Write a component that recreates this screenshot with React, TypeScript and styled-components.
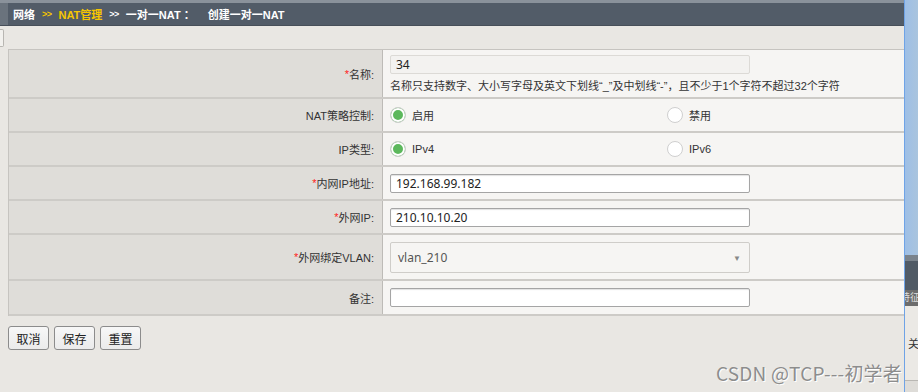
import styled, { createGlobalStyle } from 'styled-components';

const GlobalStyle = createGlobalStyle`
  html, body {
    margin: 0;
    padding: 0;
    background: #e9e7e3;
  }
  body {
    font-family: "Liberation Sans", "Noto Sans CJK SC", sans-serif;
    font-size: 11px;
    color: #333;
  }
`;

const Page = styled.div`
  position: relative;
  display: flex;
  width: 918px;
  height: 392px;
  overflow: hidden;
`;

const Main = styled.div`
  width: 904px;
  display: flex;
  flex-direction: column;
  background: #e9e7e3;
`;

const TopStrip = styled.div`
  height: 3px;
  background: #8a929b;
`;

const HeaderBar = styled.div`
  height: 23px;
  display: flex;
  background: #525c68;
  border-bottom: 1px solid #474f59;
  box-sizing: border-box;
`;

const HeaderEdge = styled.div`
  width: 8px;
  background: #6a737d;
`;

const Crumbs = styled.div`
  display: flex;
  align-items: center;
  gap: 7px;
  padding-left: 5px;
  color: #fff;
  font-weight: bold;
  font-size: 11px;
  font-family: "Liberation Sans", "Noto Sans CJK SC", sans-serif;
`;

const Crumb = styled.span<{ $active?: boolean; $gap?: number }>`
  color: ${p => (p.$active ? '#f7c600' : '#fff')};
  margin-left: ${p => p.$gap ?? 0}px;
`;

const Sep = styled.span<{ $active?: boolean }>`
  color: ${p => (p.$active ? '#f7c600' : '#fff')};
  font-size: 9px;
  letter-spacing: -0.5px;
`;

const TabRow = styled.div`
  height: 23px;
  display: flex;
  align-items: center;
`;

const TabStub = styled.div`
  width: 3px;
  height: 16px;
  border: 1px solid #b8b6b2;
  border-left: none;
  border-radius: 0 2px 2px 0;
  background: #f2f1ee;
`;

const FormTable = styled.div`
  margin-left: 8px;
  width: 896px;
  border-top: 1px solid #c6c4c0;
  border-left: 1px solid #c6c4c0;
  display: flex;
  flex-direction: column;
`;

const Row = styled.div<{ $h: number }>`
  display: grid;
  grid-template-columns: 374px 1fr;
  height: ${p => p.$h}px;
  border-bottom: 2px solid #cdcbc7;
  box-sizing: border-box;
`;

const LabelCell = styled.div`
  background: #dfddd9;
  border-right: 1px solid #bdbbb7;
  display: flex;
  align-items: center;
  justify-content: flex-end;
  padding-right: 8px;
  color: #333;
`;

const Req = styled.span`
  color: #ff2020;
`;

const ValueCell = styled.div`
  background: #f6f5f3;
  display: flex;
  flex-direction: column;
  justify-content: center;
  padding-left: 7px;
`;

const TextInput = styled.input<{ $muted?: boolean }>`
  width: 360px;
  height: 19px;
  box-sizing: border-box;
  border: 1px solid ${p => (p.$muted ? '#dcdad6' : '#a5a5a5')};
  border-radius: 2px;
  background: ${p => (p.$muted ? '#f3f2f0' : '#fff')};
  box-shadow: ${p => (p.$muted ? 'none' : 'inset 0 1px 1px rgba(0,0,0,0.12)')};
  padding: 0 5px;
  font-family: "Noto Sans", "Liberation Sans", sans-serif;
  font-size: 12px;
  color: #222;
  outline: none;
`;

const Hint = styled.div`
  margin-top: 3px;
  font-size: 11px;
  color: #333;
  white-space: nowrap;
`;

const RadioGroup = styled.div`
  display: grid;
  grid-template-columns: 277px 1fr;
`;

const RadioOption = styled.label`
  display: flex;
  align-items: center;
  gap: 6px;
  color: #333;
`;

const RadioDot = styled.span<{ $on?: boolean }>`
  width: 16px;
  height: 16px;
  border-radius: 50%;
  box-sizing: border-box;
  border: 1px solid #cfcfcf;
  background: ${p => (p.$on ? '#5cb85c' : '#fff')};
  box-shadow: ${p => (p.$on ? 'inset 0 0 0 2px #fff' : 'none')};
`;

const Select = styled.div`
  width: 360px;
  height: 31px;
  box-sizing: border-box;
  border: 1px solid #cfcdc9;
  border-radius: 2px;
  background: #f6f5f3;
  display: flex;
  align-items: center;
  justify-content: space-between;
  padding: 0 8px 0 7px;
  color: #555;
  font-family: "Noto Sans", "Liberation Sans", sans-serif;
  font-size: 12px;
`;

const Caret = styled.span`
  font-size: 8px;
  color: #888;
`;

const ButtonRow = styled.div`
  display: flex;
  gap: 5px;
  margin: 10px 0 0 8px;
`;

const Button = styled.button`
  width: 41px;
  height: 24px;
  border: 1px solid #8c8c8c;
  border-radius: 3px;
  background: linear-gradient(#f7f7f7, #ebebeb);
  font-family: "Noto Sans CJK SC", sans-serif;
  font-size: 12px;
  color: #222;
  padding: 0;
`;

const SideStrip = styled.div`
  width: 14px;
  display: flex;
  flex-direction: column;
  border-left: 1px solid #6fa3e6;
  box-sizing: border-box;
`;

const SideBlue = styled.div`
  height: 255px;
  background: linear-gradient(90deg, #9ebfe6, #a9c4de);
`;

const SideDark = styled.div`
  height: 35px;
  background: #505a65;
  border-top: 6px solid #7a838c;
  box-sizing: border-box;
`;

const SideTab = styled.div`
  height: 16px;
  background: #6c6c6c;
  color: #ddd;
  font-size: 10px;
  line-height: 16px;
  white-space: nowrap;
  overflow: hidden;
  text-indent: -5px;
`;

const SideLight = styled.div`
  height: 74px;
  background: #ebe9e5;
  border-bottom: 1px solid #b9b7b3;
  color: #333;
  font-size: 11px;
  display: flex;
  align-items: center;
  padding-left: 3px;
`;

const SideRest = styled.div`
  flex: 1;
  background: #dedcd8;
`;

const Watermark = styled.div`
  position: absolute;
  right: 16px;
  bottom: 6px;
  font-family: "Noto Sans CJK SC", "Liberation Sans", sans-serif;
  font-size: 19px;
  color: #8d8d8d;
  text-shadow: 1px 1px 0 #fff;
  letter-spacing: 0.2px;
`;

export default function App() {
  return (
    <>
      <GlobalStyle />
      <Page>
        <Main>
          <TopStrip />
          <HeaderBar>
            <HeaderEdge />
            <Crumbs>
              <Crumb>网络</Crumb>
              <Sep $active>&gt;&gt;</Sep>
              <Crumb $active>NAT管理</Crumb>
              <Sep>&gt;&gt;</Sep>
              <Crumb>一对一NAT ：</Crumb>
              <Crumb $gap={6}>创建一对一NAT</Crumb>
            </Crumbs>
          </HeaderBar>
          <TabRow>
            <TabStub />
          </TabRow>
          <FormTable>
            <Row $h={49}>
              <LabelCell><Req>*</Req>名称:</LabelCell>
              <ValueCell>
                <TextInput $muted defaultValue="34" />
                <Hint>名称只支持数字、大小写字母及英文下划线“_”及中划线“-”，且不少于1个字符不超过32个字符</Hint>
              </ValueCell>
            </Row>
            <Row $h={34}>
              <LabelCell>NAT策略控制:</LabelCell>
              <ValueCell>
                <RadioGroup>
                  <RadioOption><RadioDot $on />启用</RadioOption>
                  <RadioOption><RadioDot />禁用</RadioOption>
                </RadioGroup>
              </ValueCell>
            </Row>
            <Row $h={34}>
              <LabelCell>IP类型:</LabelCell>
              <ValueCell>
                <RadioGroup>
                  <RadioOption><RadioDot $on />IPv4</RadioOption>
                  <RadioOption><RadioDot />IPv6</RadioOption>
                </RadioGroup>
              </ValueCell>
            </Row>
            <Row $h={34}>
              <LabelCell><Req>*</Req>内网IP地址:</LabelCell>
              <ValueCell>
                <TextInput defaultValue="192.168.99.182" />
              </ValueCell>
            </Row>
            <Row $h={34}>
              <LabelCell><Req>*</Req>外网IP:</LabelCell>
              <ValueCell>
                <TextInput defaultValue="210.10.10.20" />
              </ValueCell>
            </Row>
            <Row $h={46}>
              <LabelCell><Req>*</Req>外网绑定VLAN:</LabelCell>
              <ValueCell>
                <Select>
                  <span>vlan_210</span>
                  <Caret>▼</Caret>
                </Select>
              </ValueCell>
            </Row>
            <Row $h={35}>
              <LabelCell>备注:</LabelCell>
              <ValueCell>
                <TextInput defaultValue="" />
              </ValueCell>
            </Row>
          </FormTable>
          <ButtonRow>
            <Button>取消</Button>
            <Button>保存</Button>
            <Button>重置</Button>
          </ButtonRow>
        </Main>
        <SideStrip>
          <SideBlue />
          <SideDark />
          <SideTab>特征</SideTab>
          <SideLight>关</SideLight>
          <SideRest />
        </SideStrip>
        <Watermark>CSDN @TCP---初学者</Watermark>
      </Page>
    </>
  );
}
